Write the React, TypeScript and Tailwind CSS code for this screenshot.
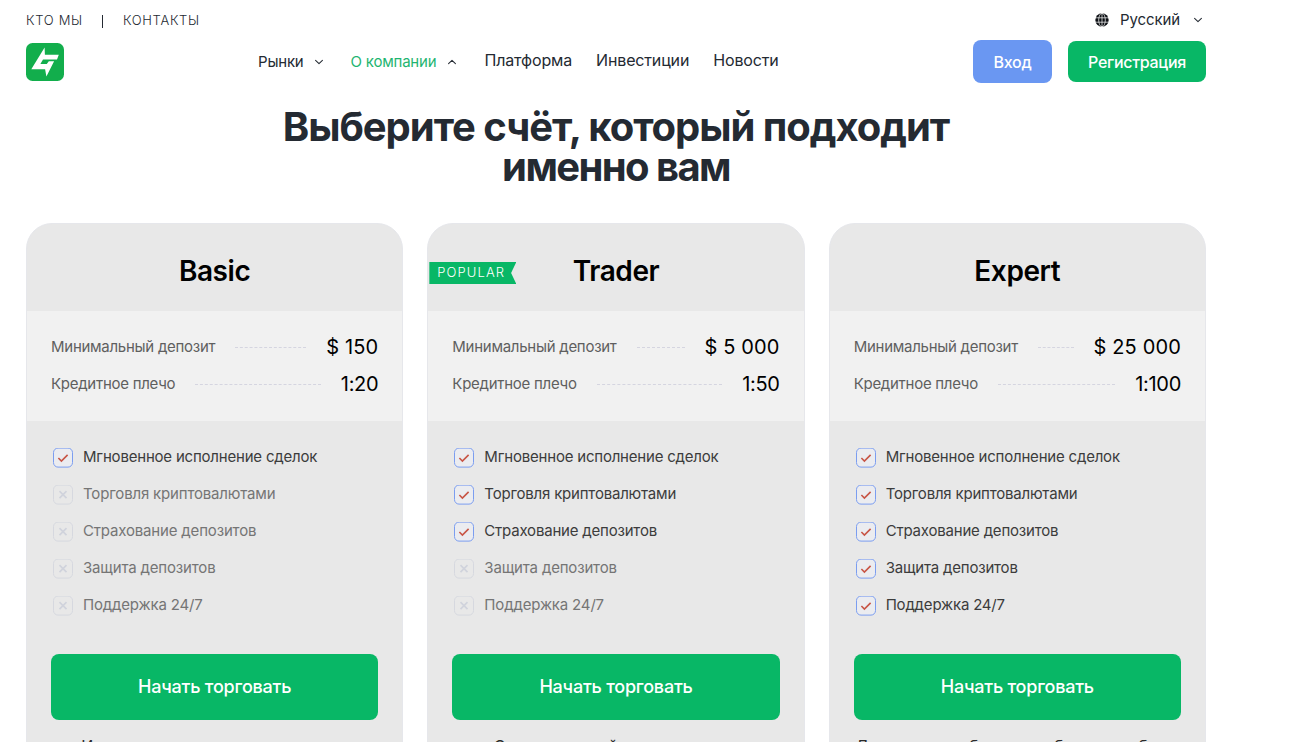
import React from 'react';
import { ChevronDown, ChevronUp } from 'lucide-react';

interface Stat {
  label: string;
  value: string;
}

interface Plan {
  name: string;
  popular?: boolean;
  deposit: string;
  leverage: string;
  // how many of the features are included, counted from the top
  included: number;
  note: string;
}

const features = [
  'Мгновенное исполнение сделок',
  'Торговля криптовалютами',
  'Страхование депозитов',
  'Защита депозитов',
  'Поддержка 24/7',
];

const plans: Plan[] = [
  {
    name: 'Basic',
    deposit: '$ 150',
    leverage: '1:20',
    included: 1,
    note: 'Идеально для активных новичков',
  },
  {
    name: 'Trader',
    popular: true,
    deposit: '$ 5 000',
    leverage: '1:50',
    included: 3,
    note: 'С расширенной панелью услуг',
  },
  {
    name: 'Expert',
    deposit: '$ 25 000',
    leverage: '1:100',
    included: 5,
    note: 'Для тех, кому больше выбора и свободы',
  },
];

const Logo: React.FC = () => (
  <svg className="h-[38px] w-[38px]" viewBox="0 0 38 38">
    <rect width="38" height="38" rx="6.5" fill="#12ae4c" />
    <path
      fill="#fff"
      d="M18.6 4.6 18.9 11.7H32.8L31 16.6H17L14.4 21H20.8L22.8 18.2H28.1L20.4 33.5 19.1 26.2H5.3Z"
    />
  </svg>
);

const Globe: React.FC = () => (
  <svg className="h-3.5 w-3.5" viewBox="0 0 14 14" fill="none">
    <circle cx="7" cy="7" r="6.7" fill="#0b0e12" />
    <g stroke="#fff" strokeWidth="0.7">
      <path d="M0 4.8h14M0 9.2h14M7 0v14" />
      <ellipse cx="7" cy="7" rx="3.3" ry="6.8" />
    </g>
  </svg>
);

const CheckIcon: React.FC = () => (
  <svg className="h-5 w-5 shrink-0" viewBox="0 0 20 20" fill="none">
    <rect x="0.5" y="0.1" width="19" height="19" rx="4.5" fill="#ebecf0" stroke="#7b9df0" />
    <path d="m5.4 10 3 3 6.2-6.1" stroke="#c85546" strokeWidth="1.6" />
  </svg>
);

const CrossIcon: React.FC = () => (
  <svg className="h-5 w-5 shrink-0" viewBox="0 0 20 20" fill="none">
    <rect x="0.5" y="0.1" width="19" height="19" rx="4.5" stroke="#d6d8df" />
    <path d="m6.5 6.2 7 7m0-7-7 7" stroke="#d0d3dc" strokeWidth="1.7" />
  </svg>
);

const StatRow: React.FC<Stat> = ({ label, value }) => (
  <div className="flex h-[37px] items-center gap-5">
    <span className="text-[15px] tracking-[-0.27px] text-[#5f5f5f]">{label}</span>
    <span className="-mt-px flex-1 border-t border-dashed border-[#d5d5e0]" />
    <span
      className={
        value.startsWith('$')
          ? '-mt-0.5 text-xl tracking-[0.15px] text-black'
          : '-mt-0.5 text-xl tracking-[-0.3px] text-black'
      }
    >
      {value}
    </span>
  </div>
);

const PlanCard: React.FC<{ plan: Plan }> = ({ plan }) => (
  <article className="h-[600px] overflow-hidden rounded-t-[26px] border border-[#e6e7eb] bg-[#e8e8e8]">
    <header className="relative flex h-[87px] items-center justify-center pt-[6px]">
      {plan.popular && (
        <span className="absolute top-[38px] left-px flex h-[22px] w-[87px] items-center bg-[#08b766] pl-2 text-[13px] font-light tracking-[1.1px] text-white [clip-path:polygon(0_0,100%_0,94%_50%,100%_100%,0_100%)]">
          POPULAR
        </span>
      )}
      <h2 className="text-[28px] font-semibold tracking-[-0.4px] text-black">{plan.name}</h2>
    </header>

    <div className="h-[110px] bg-[#f1f1f1] px-6 pt-[18px]">
      <StatRow label="Минимальный депозит" value={plan.deposit} />
      <StatRow label="Кредитное плечо" value={plan.leverage} />
    </div>

    <ul className="px-6 pt-[18px]">
      {features.map((feature, i) => {
        const active = i < plan.included;
        return (
          <li key={feature} className="flex h-[37px] items-center gap-2.5 pl-0.5">
            {active ? <CheckIcon /> : <CrossIcon />}
            <span
              className={
                active
                  ? 'text-[15px] tracking-[-0.2px] text-[#3c3c3c]'
                  : 'text-[15px] tracking-[-0.17px] text-[#757575]'
              }
            >
              {feature}
            </span>
          </li>
        );
      })}
    </ul>

    <div className="px-6 pt-[30px]">
      <button className="h-[66px] w-full rounded-lg bg-[#08b766] text-lg font-medium tracking-[-0.22px] text-white">
        Начать торговать
      </button>
      <p className="mt-[14px] text-center text-base whitespace-nowrap text-[#2b2b2b]">{plan.note}</p>
    </div>
  </article>
);

export default function App() {
  return (
    <div className="h-[742px] overflow-hidden bg-white font-['Inter',sans-serif] text-[#242a32]">
      <div className="ml-[26px] w-[1180px]">
        {/* Top bar */}
        <div className="flex h-10 items-center justify-between">
          <div className="flex items-center pt-0.5 text-[13px] font-light tracking-[0.7px]">
            <a>КТО МЫ</a>
            <span className="mr-5 ml-[19px] h-[13px] w-px bg-[#242a32]" />
            <a>КОНТАКТЫ</a>
          </div>
          <div className="flex items-center text-[15px] tracking-[-0.1px]">
            <Globe />
            <span className="mr-2.5 ml-[11px]">Русский</span>
            <ChevronDown className="h-4 w-4" strokeWidth={1.8} viewBox="-2 -2 28 28" />
          </div>
        </div>

        {/* Main navigation */}
        <div className="flex h-[43px] items-center">
          <Logo />
          <nav className="ml-[194px] flex flex-1 items-center gap-6 text-base tracking-[-0.15px]">
            <a className="flex items-center gap-[7px] pt-px text-[15px] tracking-[-0.2px]">
              Рынки
              <ChevronDown className="h-4 w-4" strokeWidth={1.8} viewBox="-2 -2 28 28" />
            </a>
            <a className="flex items-center gap-2 pt-px text-[15px] tracking-[-0.2px] text-[#1fb571]">
              О компании
              <ChevronUp className="h-4 w-4 text-[#242a32]" strokeWidth={1.8} viewBox="-2 -2 28 28" />
            </a>
            <a className="-mt-[3px]">Платформа</a>
            <a className="-mt-[3px]">Инвестиции</a>
            <a className="-mt-[3px]">Новости</a>
          </nav>
          <div className="flex items-center gap-4 font-medium tracking-[-0.3px] text-white">
            <button className="h-[43px] w-[79px] rounded-lg bg-[#6a97f2]">Вход</button>
            <button className="h-[41px] w-[138px] rounded-lg bg-[#08b766]">Регистрация</button>
          </div>
        </div>

        <h1 className="mt-6 text-center text-[40px] leading-10 font-bold">
          <span className="block tracking-[-1.04px]">Выберите счёт, который подходит</span>
          <span className="block tracking-[-1.6px]">именно вам</span>
        </h1>

        <section className="mt-9 grid grid-cols-3 gap-6">
          {plans.map((plan) => (
            <PlanCard key={plan.name} plan={plan} />
          ))}
        </section>
      </div>
    </div>
  );
}
